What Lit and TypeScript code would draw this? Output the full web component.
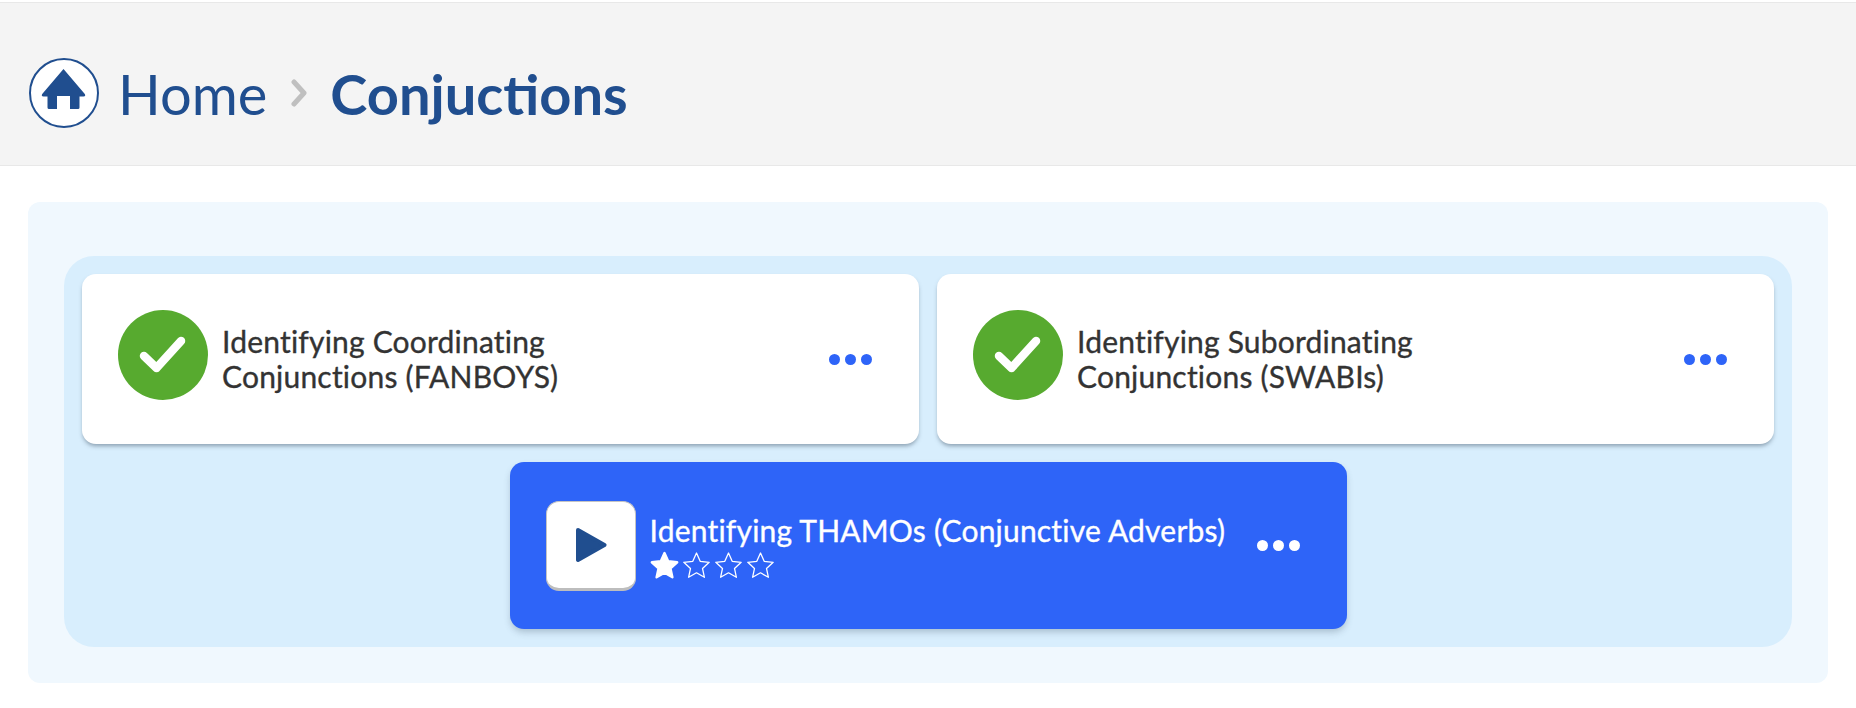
import { LitElement, html, css, svg } from "lit";
import { customElement } from "lit/decorators.js";

const starPath = "M14.5 2 L18.2 10.3 L27.2 11.3 L20.5 17.4 L22.4 26.3 L14.5 21.8 L6.6 26.3 L8.5 17.4 L1.8 11.3 L10.8 10.3 Z";

function star(filled: boolean) {
  return html`<svg class="star" viewBox="0 0 29 28" width="29" height="28">
    ${svg`<path d=${starPath} fill=${filled ? "#fff" : "none"} stroke="#fff" stroke-width=${filled ? 2.4 : 1.3} stroke-linejoin="round"></path>`}
  </svg>`;
}

const dots = html`<span class="dots"><i></i><i></i><i></i></span>`;

const check = html`<span class="done"><svg viewBox="0 0 90 90" width="90" height="90">
  <path d="M26 46 L38.5 58 L63 31" fill="none" stroke="#fff" stroke-width="8.5" stroke-linecap="round" stroke-linejoin="round"></path>
</svg></span>`;

@customElement("app-root")
export class AppRoot extends LitElement {
  static styles = css`
    :host {
      display: block;
      width: 1856px;
      height: 708px;
      background: #fff;
      font-family: "Lato", sans-serif;
      overflow: hidden;
    }
    .header {
      margin-top: 2px;
      height: 162px;
      box-sizing: content-box;
      background: #f4f4f4;
      border-top: 1px solid #e8e8e8;
      border-bottom: 1px solid #e8e8e8;
      display: flex;
      align-items: center;
      padding: 0 0 0 29px;
      color: #204e8f;
      font-size: 56px;
    }
    .crumb { display: flex; align-items: center; margin-top: 18px; }
    .home-ic { flex: none; margin-right: 19px; display: block; }
    .chev { flex: none; margin: 0 23px 0 24px; display: block; }
    .bold { font-weight: 700; }
    .panel {
      margin: 36px 28px 0;
      background: #f0f8fe;
      border-radius: 12px;
      padding: 54px 36px 36px;
    }
    .group {
      background: #d8eefd;
      border-radius: 30px;
      padding: 18px;
      display: flex;
      flex-wrap: wrap;
      justify-content: center;
      gap: 18px;
    }
    .card {
      width: 837px;
      height: 170px;
      box-sizing: border-box;
      background: #fff;
      border-radius: 14px;
      box-shadow: 0 3px 4px -1px rgba(60, 80, 100, 0.5);
      padding: 0 47px 0 36px;
      display: flex;
      align-items: center;
      color: #333;
    }
    .card.active {
      height: 167px;
      background: #2e64f8;
      color: #fff;
      box-shadow: 0 4px 7px -1px rgba(60, 80, 100, 0.3);
    }
    .done {
      flex: none;
      width: 90px;
      height: 90px;
      border-radius: 50%;
      background: #57aa2f;
      margin: -8px 14px 0 0;
    }
    .done svg { display: block; }
    .play {
      flex: none;
      width: 90px;
      height: 90px;
      box-sizing: border-box;
      background: #fff;
      border-radius: 13px;
      border: 1px solid #c4c4c4;
      border-bottom: 3px solid #bdbdbd;
      margin-right: 14px;
      display: flex;
      align-items: center;
      justify-content: center;
    }
    .body { flex: 1; min-width: 0; }
    .title {
      font-size: 30px;
      line-height: 35.5px;
      letter-spacing: 0.2px;
      -webkit-text-stroke: 0.35px currentColor;
    }
    .title.narrow { width: 420px; }
    .stars { display: flex; gap: 3.3px; margin-top: 3px; height: 27px; }
    .star { display: block; }
    .dots { flex: none; display: flex; gap: 5px; }
    .dots i {
      width: 11px;
      height: 11px;
      border-radius: 50%;
      background: #2e64f8;
    }
    .active .dots i { background: #fff; }
  `;

  render() {
    return html`
      <div class="header">
        <div class="crumb">
          <svg class="home-ic" viewBox="0 0 70 70" width="70" height="70">
            <circle cx="35" cy="35" r="34" fill="#fff" stroke="#204e8f" stroke-width="2"></circle>
            <path fill="#204e8f" d="M34.5 11 L55.8 36 Q57 38.5 54.5 38.5 L50.5 38.5 L50.5 49.5 Q50.5 51 49 51 L41 51 L41 38 L28 38 L28 51 L20 51 Q18.5 51 18.5 49.5 L18.5 38.5 L14.5 38.5 Q12 38.5 13.2 36 Z"></path>
          </svg>
          <span>Home</span>
          <svg class="chev" viewBox="0 0 16 28" width="16" height="28">
            <path d="M3 3 L13 14 L3 25" fill="none" stroke="#bfbfbf" stroke-width="5" stroke-linecap="round" stroke-linejoin="round"></path>
          </svg>
          <span class="bold">Conjuctions</span>
        </div>
      </div>
      <div class="panel">
        <div class="group">
          <div class="card">
            ${check}
            <div class="body"><div class="title narrow">Identifying Coordinating Conjunctions (FANBOYS)</div></div>
            ${dots}
          </div>
          <div class="card">
            ${check}
            <div class="body"><div class="title narrow">Identifying Subordinating Conjunctions (SWABIs)</div></div>
            ${dots}
          </div>
          <div class="card active">
            <span class="play">
              <svg viewBox="0 0 32 36" width="32" height="36">
                <path d="M3 3 L29.5 18 L3 33 Z" fill="#204e8f" stroke="#204e8f" stroke-width="4" stroke-linejoin="round"></path>
              </svg>
            </span>
            <div class="body">
              <div class="title">Identifying THAMOs (Conjunctive Adverbs)</div>
              <div class="stars">${star(true)}${star(false)}${star(false)}${star(false)}</div>
            </div>
            ${dots}
          </div>
        </div>
      </div>
    `;
  }
}
